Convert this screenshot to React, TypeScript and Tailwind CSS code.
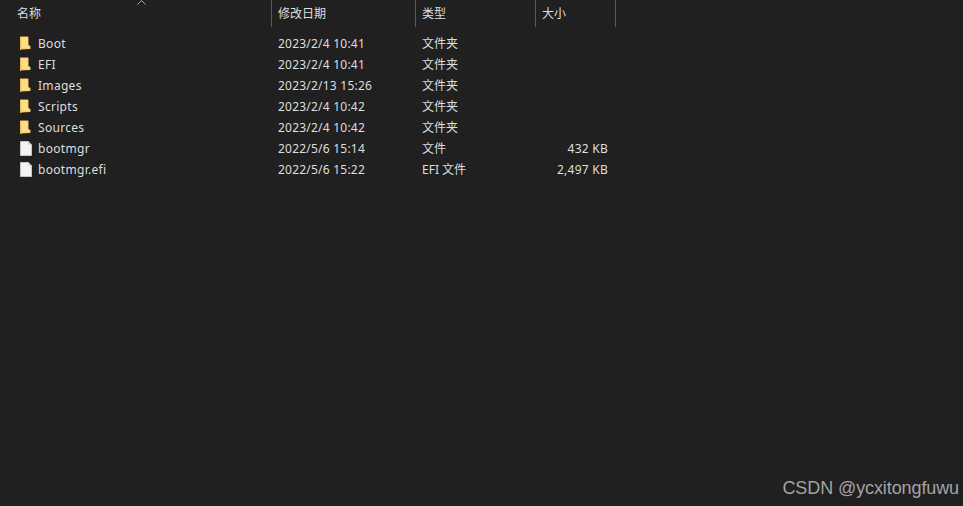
const files = [
  { name: 'Boot', date: '2023/2/4 10:41', type: '文件夹', size: '', folder: true },
  { name: 'EFI', date: '2023/2/4 10:41', type: '文件夹', size: '', folder: true },
  { name: 'Images', date: '2023/2/13 15:26', type: '文件夹', size: '', folder: true },
  { name: 'Scripts', date: '2023/2/4 10:42', type: '文件夹', size: '', folder: true },
  { name: 'Sources', date: '2023/2/4 10:42', type: '文件夹', size: '', folder: true },
  { name: 'bootmgr', date: '2022/5/6 15:14', type: '文件', size: '432 KB', folder: false },
  { name: 'bootmgr.efi', date: '2022/5/6 15:22', type: 'EFI 文件', size: '2,497 KB', folder: false },
]

function FolderIcon() {
  return (
    <svg width="12" height="15" viewBox="0 0 12 15" aria-hidden="true">
      <path d="M0 0.5 H8 L8.5 1 V9 L10.5 10 V13 L1.5 13.5 L1 14 H0 Z" fill="#eebf58" />
      <path d="M1 1 H7.8 L8 9.5 L9.8 10.5 V12.5 H1.5 Z" fill="#fcdd8a" />
    </svg>
  )
}

function FileIcon() {
  return (
    <svg width="12" height="15" viewBox="0 0 12 15" aria-hidden="true">
      <path d="M0.5 0.5 H8.5 L11.5 3.5 V14.5 H0.5 Z" fill="#f3f3f5" stroke="#c4c4c8" strokeWidth="1" />
      <path d="M8.5 0.5 V3.5 H11.5 Z" fill="#b9b9bd" />
    </svg>
  )
}

export default function App() {
  return (
    <div className="relative h-[506px] w-[963px] overflow-hidden bg-[#202020] font-['Noto_Sans','Noto_Sans_CJK_SC',sans-serif] text-[12px] text-[#dedede]">
      <div className="flex h-[27px] w-[616px]">
        <div className="flex w-[272px] items-center border-r border-[#5a5a5a] pl-[17px]">名称</div>
        <div className="flex w-[144px] items-center border-r border-[#5a5a5a] pl-[6px]">修改日期</div>
        <div className="flex w-[120px] items-center border-r border-[#5a5a5a] pl-[6px]">类型</div>
        <div className="flex w-[80px] items-center border-r border-[#5a5a5a] pl-[6px]">大小</div>
      </div>

      <svg className="absolute left-[137px] top-0" width="9" height="5" viewBox="0 0 9 5" aria-hidden="true">
        <path d="M0.5 4.5 L4.5 0.5 L8.5 4.5" fill="none" stroke="#a8a8a8" strokeWidth="1" />
      </svg>

      <div className="mt-[6px] flex w-[616px] flex-col">
        {files.map((file) => (
          <div key={file.name} className="flex h-[21px] items-center">
            <div className="flex w-[272px] items-center">
              <span className="ml-[20px] mr-[6px] flex h-[15px] w-[12px]">
                {file.folder ? <FolderIcon /> : <FileIcon />}
              </span>
              <span className="tracking-[0.3px]">{file.name}</span>
            </div>
            <div className="w-[144px] pl-[6px] tracking-[0.22px]">{file.date}</div>
            <div className="w-[120px] pl-[6px]">{file.type}</div>
            <div className="w-[80px] pr-[8px] text-right tracking-[0.25px]">{file.size}</div>
          </div>
        ))}
      </div>

      <div className="absolute bottom-[7px] right-[4px] font-['Liberation_Sans',sans-serif] text-[18px] leading-[22px] tracking-[-0.1px] text-[#a3a3a3]">
        CSDN @ycxitongfuwu
      </div>
    </div>
  )
}
